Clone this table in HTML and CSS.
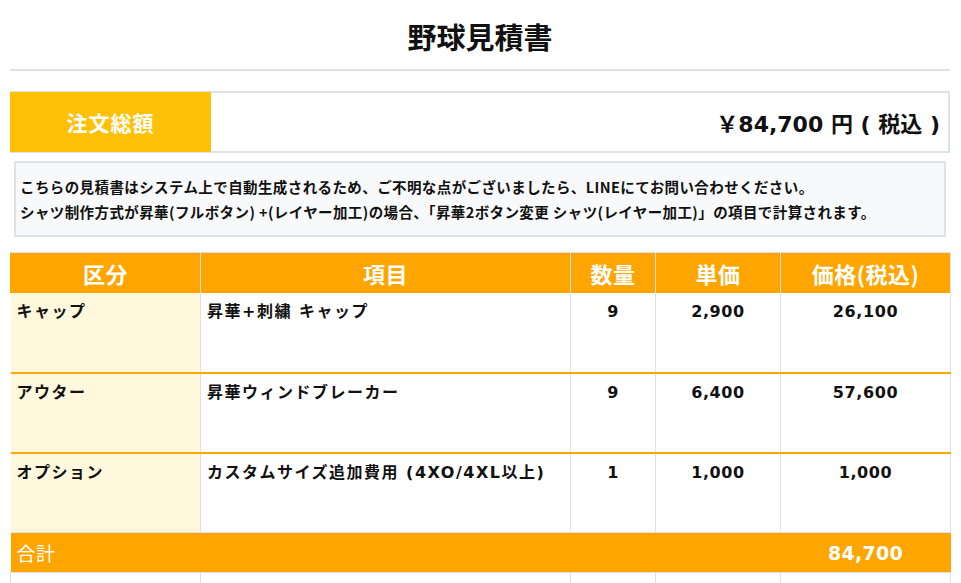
FILE: index.html
```html
<!DOCTYPE html>
<html lang="ja">
<head>
<meta charset="utf-8">
<title>野球見積書</title>
<link rel="stylesheet" href="styles.css">
</head>
<body>
<div class="page">
  <header class="page-header">
    <h1 class="title">野球見積書</h1>
  </header>

  <div class="total-box">
    <div class="total-label">注文総額</div>
    <div class="total-value">￥84,700 円 ( 税込 )</div>
  </div>

  <div class="notice">
    <p>こちらの見積書はシステム上で自動生成されるため、ご不明な点がございましたら、LINEにてお問い合わせください。</p>
    <p>シャツ制作方式が昇華(フルボタン) +(レイヤー加工)の場合、「昇華2ボタン変更 シャツ(レイヤー加工)」の項目で計算されます。</p>
  </div>

  <table class="quote">
    <colgroup>
      <col class="c-cat"><col class="c-item"><col class="c-qty"><col class="c-unit"><col class="c-price">
    </colgroup>
    <thead>
      <tr>
        <th>区分</th><th>項目</th><th>数量</th><th>単価</th><th>価格(税込)</th>
      </tr>
    </thead>
    <tbody>
      <tr class="row">
        <td class="cat">キャップ</td><td>昇華+刺繍 キャップ</td><td class="num">9</td><td class="num">2,900</td><td class="num">26,100</td>
      </tr>
      <tr class="row sep">
        <td class="cat">アウター</td><td>昇華ウィンドブレーカー</td><td class="num">9</td><td class="num">6,400</td><td class="num">57,600</td>
      </tr>
      <tr class="row sep">
        <td class="cat">オプション</td><td>カスタムサイズ追加費用 (4XO/4XL以上)</td><td class="num">1</td><td class="num">1,000</td><td class="num">1,000</td>
      </tr>
      <tr class="sum">
        <td colspan="4" class="sum-label">合計</td><td class="sum-value">84,700</td>
      </tr>
      <tr class="blank">
        <td></td><td></td><td></td><td></td><td></td>
      </tr>
    </tbody>
  </table>
</div>
</body>
</html>
```

FILE: styles.css
```css
* { box-sizing: border-box; }
html, body { margin: 0; padding: 0; background: #fff; }
body {
  font-family: "DejaVu Sans", "Noto Sans CJK JP", sans-serif;
  color: #111;
}
.page { padding: 0 11px 0 10px; }

.page-header {
  padding-top: 16px;
  padding-bottom: 13px;
  border-bottom: 2px solid #dee2e6;
}
.title {
  margin: 0;
  text-align: center;
  font-size: 29px;
  line-height: 40px;
  font-weight: 700;
  font-family: "Noto Sans CJK JP", sans-serif;
}

.total-box {
  margin-top: 20px;
  display: flex;
  height: 62px;
  border: 2px solid #dee2e6;
  border-left: 0;
}
.total-label {
  width: 201px;
  margin-top: -1px;
  margin-bottom: -1px;
  background: #ffc107;
  color: #fff;
  font-family: "Noto Sans CJK JP", sans-serif;
  font-weight: 700;
  font-size: 21px;
  letter-spacing: 1px;
  display: flex;
  align-items: center;
  justify-content: center;
}
.total-value {
  flex: 1;
  display: flex;
  align-items: center;
  justify-content: flex-end;
  padding-right: 8px;
  font-size: 22px;
  font-weight: 700;
}

.notice {
  margin: 8px 4px 0;
  border: 2px solid #dee2e6;
  background: #f8f9fa;
  padding: 11px 4px;
}
.notice p {
  margin: 0;
  font-family: "Noto Sans CJK JP", sans-serif;
  font-size: 14.5px;
  font-weight: 700;
  line-height: 25px;
  letter-spacing: 0.4px;
  white-space: nowrap;
}

.quote {
  margin-top: 15px;
  width: 940px;
  border-collapse: collapse;
  table-layout: fixed;
}
.c-cat { width: 190px; }
.c-item { width: 370px; }
.c-qty { width: 85px; }
.c-unit { width: 125px; }
.c-price { width: 170px; }

.quote th {
  background: #ffa500;
  color: #fff;
  font-family: "Noto Sans CJK JP", sans-serif;
  font-size: 22px;
  letter-spacing: 0.5px;
  font-weight: 700;
  height: 40px;
  padding: 0;
  border: 1px solid #dee2e6;
  border-bottom: 0;
  border-left-color: #ffa500;
}
.quote th + th { border-left-color: #dee2e6; }

.quote td {
  border-left: 1px solid #dee2e6;
  border-right: 1px solid #dee2e6;
  vertical-align: top;
  padding: 8px 6px 0;
  font-size: 16px;
  font-weight: 700;
  line-height: 22px;
  letter-spacing: 1.5px;
}
.quote td:first-child { border-left: 0; }
.row td { height: 80px; }
.row.sep td { border-top: 2px solid #ffa500; }
.cat { background: #fff8dc; }
.quote td.num { text-align: center; letter-spacing: 0.6px; }

.sum td {
  background: #ffa500;
  color: #fff;
  height: 40px;
  vertical-align: middle;
  padding: 0 6px;
  border-top: 1px solid #dee2e6;
  border-left: 0;
  border-right: 0;
}
.quote td.sum-label {
  font-family: "Noto Sans CJK JP", sans-serif;
  font-weight: 400;
  font-size: 19px;
  letter-spacing: 0.5px;
}
.quote td.sum-value {
  text-align: center;
  font-size: 19px;
  font-weight: 700;
  letter-spacing: 0.3px;
}
.blank td {
  height: 40px;
  border-top: 1px solid #dee2e6;
}
.blank td:first-child { border-left: 1px solid #dee2e6; }
```
